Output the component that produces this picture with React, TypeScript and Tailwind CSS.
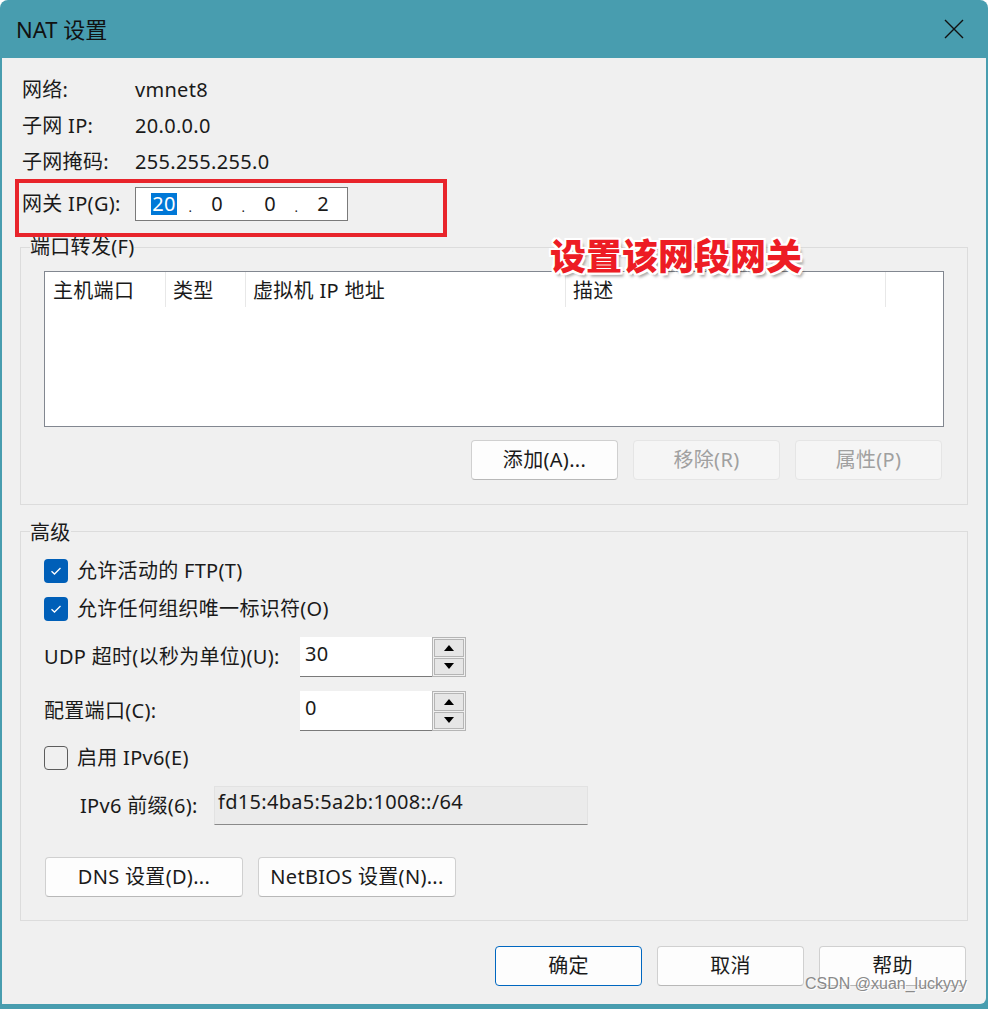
import React from 'react';

const font = { fontFamily: '"Noto Sans", "Noto Sans CJK SC", sans-serif' };

const Btn: React.FC<{ label: string; w?: string; disabled?: boolean; primary?: boolean }> = ({
  label,
  w = 'w-[147px]',
  disabled,
  primary
}) => (
  <div
    className={`${w} h-[40px] flex items-center justify-center rounded-[4px] text-[20px] ${
      disabled
        ? 'bg-[#f5f5f5] border border-[#e5e5e5] text-[#a0a0a0]'
        : primary
        ? 'bg-[#fdfdfd] border border-[#0067c0] text-[#1a1a1a]'
        : 'bg-[#fdfdfd] border border-[#d0d0d0] border-b-[#b8b8b8] text-[#1a1a1a]'
    }`}
  >
    {label}
  </div>
);

const Check: React.FC<{ checked?: boolean; label: string }> = ({ checked, label }) => (
  <div className="flex items-center h-[24px]">
    {checked ? (
      <div className="w-[24px] h-[24px] rounded-[4px] bg-[#005fb8] flex items-center justify-center">
        <svg width="12" height="10" viewBox="0 0 12 10" fill="none">
          <path d="M1.5 5.2 L4.5 8 L10.5 2" stroke="white" strokeWidth="1.3" />
        </svg>
      </div>
    ) : (
      <div className="w-[24px] h-[24px] rounded-[4px] border border-[#5d5d5d]" />
    )}
    <span className="ml-[9px]">{label}</span>
  </div>
);

const Spin: React.FC<{ value: string }> = ({ value }) => (
  <div className="flex h-[40px]">
    <div className="w-[132px] h-full bg-white border-b border-[#7a7a7a] flex items-center pl-[5px] pb-[6px]">
      {value}
    </div>
    <div className="w-[34px] h-full border border-[#b5b5b5] flex flex-col gap-[1px] p-[1px]">
      <div className="flex-1 bg-[#e6e6e6] border border-[#b5b5b5] flex items-center justify-center">
        <svg width="10" height="6" viewBox="0 0 10 6"><path d="M5 0 L10 6 L0 6 Z" fill="#000" /></svg>
      </div>
      <div className="flex-1 bg-[#e6e6e6] border border-[#b5b5b5] flex items-center justify-center">
        <svg width="10" height="6" viewBox="0 0 10 6"><path d="M0 0 L10 0 L5 6 Z" fill="#000" /></svg>
      </div>
    </div>
  </div>
);

export default function App() {
  return (
    <div className="w-[988px] h-[1009px] bg-[#489daf] rounded-t-[8px] flex flex-col pl-[2px] pr-[2px] pb-[5px]" style={font}>
      {/* title bar */}
      <div className="h-[58px] flex items-center justify-between pl-[14px] pr-[22px] shrink-0">
        <span className="text-[22px] text-[#111]">NAT 设置</span>
        <svg width="20" height="20" viewBox="0 0 20 20">
          <path d="M1 1 L19 19 M19 1 L1 19" stroke="#111" strokeWidth="1.4" />
        </svg>
      </div>

      <div className="relative flex-1 bg-[#f0f0f0] rounded-br-[6px] text-[#1a1a1a] text-[20px] tracking-[0.3px]">
        {/* info rows */}
        <div className="pl-[20px] pt-[14px]">
          {[
            ['网络:', 'vmnet8'],
            ['子网 IP:', '20.0.0.0'],
            ['子网掩码:', '255.255.255.0']
          ].map(([k, v]) => (
            <div key={k} className="h-[36px] flex items-center">
              <span className="w-[113px]">{k}</span>
              <span>{v}</span>
            </div>
          ))}
          <div className="mt-[7px] h-[34px] flex items-center">
            <span className="w-[113px]">网关 IP(G):</span>
            <div className="w-[213px] h-[34px] bg-white border border-[#7a7a7a] flex items-center pl-[4px]">
              <span className="w-[48px] text-center">
                <span className="bg-[#0078d7] text-white px-[1px] leading-[22px] inline-block">20</span>
              </span>
              <span className="w-[5px] text-center text-[13px] pt-[8px]">.</span>
              <span className="w-[48px] text-center">0</span>
              <span className="w-[5px] text-center text-[13px] pt-[8px]">.</span>
              <span className="w-[48px] text-center">0</span>
              <span className="w-[5px] text-center text-[13px] pt-[8px]">.</span>
              <span className="w-[48px] text-center">2</span>
            </div>
          </div>
        </div>

        {/* port forwarding group */}
        <div className="relative mx-[18px] mt-[26px] border border-[#dcdcdc] pt-[23px] pl-[23px] pr-[24px] pb-[24px]">
          <span className="absolute left-[9px] top-[-14px] bg-[#f0f0f0] leading-[26px]">端口转发(F)</span>
          <div className="w-[900px] h-[156px] bg-white border border-[#828790]">
            <div className="flex h-[35px]">
              <div className="w-[121px] pl-[8px] pt-[4px] border-r border-[#e8e8e8]">主机端口</div>
              <div className="w-[80px] pl-[7px] pt-[4px] border-r border-[#e8e8e8]">类型</div>
              <div className="w-[320px] pl-[7px] pt-[4px] border-r border-[#e8e8e8]">虚拟机 IP 地址</div>
              <div className="w-[320px] pl-[7px] pt-[4px] border-r border-[#e8e8e8]">描述</div>
            </div>
          </div>
          <div className="flex justify-end gap-[15px] mt-[13px] pr-[1px]">
            <Btn label="添加(A)..." />
            <Btn label="移除(R)" disabled />
            <Btn label="属性(P)" disabled />
          </div>
        </div>

        {/* advanced group */}
        <div className="relative mx-[18px] mt-[26px] border border-[#dcdcdc] pt-[27px] pl-[23px] pb-[23px]">
          <span className="absolute left-[9px] top-[-12px] bg-[#f0f0f0] leading-[26px]">高级</span>
          <Check checked label="允许活动的 FTP(T)" />
          <div className="mt-[14px]">
            <Check checked label="允许任何组织唯一标识符(O)" />
          </div>
          <div className="mt-[16px] flex items-center">
            <span className="w-[256px]">UDP 超时(以秒为单位)(U):</span>
            <Spin value="30" />
          </div>
          <div className="mt-[14px] flex items-center">
            <span className="w-[256px]">配置端口(C):</span>
            <Spin value="0" />
          </div>
          <div className="mt-[15px]">
            <Check label="启用 IPv6(E)" />
          </div>
          <div className="mt-[16px] flex items-center pl-[36px]">
            <span className="w-[134px]">IPv6 前缀(6):</span>
            <div className="w-[374px] h-[39px] bg-[#ebebeb] border border-[#e2e2e2] border-b-[#8a8a8a] pl-[3px] pb-[8px] flex items-center">
              fd15:4ba5:5a2b:1008::/64
            </div>
          </div>
          <div className="mt-[32px] flex gap-[15px] pl-[1px]">
            <Btn label="DNS 设置(D)..." w="w-[198px]" />
            <Btn label="NetBIOS 设置(N)..." w="w-[198px]" />
          </div>
        </div>

        {/* dialog buttons */}
        <div className="flex justify-end gap-[15px] mt-[25px] pr-[20px]">
          <Btn label="确定" primary />
          <Btn label="取消" />
          <Btn label="帮助" />
        </div>

        {/* annotations */}
        <div className="absolute left-[13px] top-[121px] w-[432px] h-[58px] border-[4px] border-[#e8242b]" />
        <div
          className="absolute left-[548px] top-[181px] text-[36px] leading-none font-black tracking-normal text-[#ed1c24] [text-shadow:2px_0_0_#fff,-2px_0_0_#fff,0_2px_0_#fff,0_-2px_0_#fff,2px_2px_0_#fff,-2px_-2px_0_#fff,2px_-2px_0_#fff,-2px_2px_0_#fff,3px_4px_3px_rgba(0,0,0,0.35)]"
        >
          设置该网段网关
        </div>
        <div
          className="absolute left-[803px] top-[914px] text-[16px] tracking-normal text-[#8a8a8a] [text-shadow:1px_1px_0_#fff]"
          style={{ fontFamily: '"Liberation Sans", Arial, sans-serif' }}
        >
          CSDN @xuan_luckyyy
        </div>
      </div>
    </div>
  );
}
